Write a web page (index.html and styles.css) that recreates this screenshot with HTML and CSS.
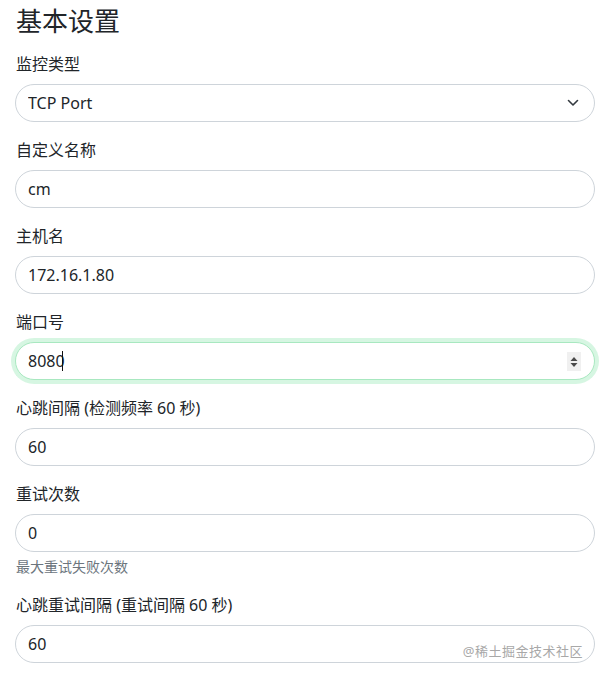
FILE: index.html
```html
<!DOCTYPE html>
<html lang="zh-CN">

<head>
  <meta charset="UTF-8" />
  <meta name="viewport" content="width=device-width, initial-scale=1.0">
  <title>基本设置</title>
  <link rel="stylesheet" href="styles.css">
</head>

<body>
  <div class="page">
    <h2 class="title">基本设置</h2>

    <form class="settings">
      <div class="field">
        <label class="field-label" for="type">监控类型</label>
        <div class="control-wrap">
          <select id="type" class="field-input">
            <option>TCP Port</option>
          </select>
          <svg class="chevron" width="12" height="8" viewBox="0 0 12 8">
            <path d="M1.5 1.5 L6 6 L10.5 1.5" fill="none" stroke="#343a40" stroke-width="1.6" stroke-linecap="round" stroke-linejoin="round" />
          </svg>
        </div>
      </div>

      <div class="field">
        <label class="field-label" for="name">自定义名称</label>
        <input id="name" class="field-input" type="text" value="cm">
      </div>

      <div class="field">
        <label class="field-label" for="host">主机名</label>
        <input id="host" class="field-input" type="text" value="172.16.1.80">
      </div>

      <div class="field">
        <label class="field-label" for="port">端口号</label>
        <div class="control-wrap">
          <input id="port" class="field-input is-focused" type="number" value="8080">
          <span class="caret"></span>
          <span class="spinner">
            <svg width="8" height="16" viewBox="0 0 8 16">
              <path d="M4 3 L7.5 7 L0.5 7 Z" fill="#4a4a4a" />
              <path d="M4 13 L7.5 9 L0.5 9 Z" fill="#4a4a4a" />
            </svg>
          </span>
        </div>
      </div>

      <div class="field">
        <label class="field-label" for="interval">心跳间隔 (检测频率 60 秒)</label>
        <input id="interval" class="field-input" type="number" value="60">
      </div>

      <div class="field">
        <label class="field-label" for="retries">重试次数</label>
        <input id="retries" class="field-input" type="number" value="0">
        <div class="field-hint">最大重试失败次数</div>
      </div>

      <div class="field">
        <label class="field-label" for="retry-interval">心跳重试间隔 (重试间隔 60 秒)</label>
        <input id="retry-interval" class="field-input" type="number" value="60">
      </div>
    </form>
  </div>

  <div class="watermark">@稀土掘金技术社区</div>
</body>

</html>
```

FILE: styles.css
```css
/* Reset & font */
* {
  box-sizing: border-box;
  margin: 0;
  padding: 0;
}

body {
  font-family: 'Noto Sans', 'Noto Sans CJK SC', sans-serif;
  font-size: 16px;
  line-height: 1.5;
  color: #212529;
  background-color: #fff;
  overflow: hidden;
}

.page {
  padding: 6px 6px 0 15px;
}

.title {
  font-size: 26px;
  font-weight: 400;
  line-height: 1.2;
  margin-bottom: 15px;
  padding-left: 1px;
}

/* Form fields */
.field {
  margin-bottom: 16px;
}

.field-label {
  display: block;
  margin-bottom: 8px;
  padding-left: 1px;
}

.control-wrap {
  position: relative;
}

.field-input {
  display: block;
  width: 100%;
  height: 38px;
  padding: 6px 12px;
  font-family: inherit;
  font-size: 16px;
  line-height: 1.5;
  color: #212529;
  background: #fff;
  border: 1px solid #ced4da;
  border-radius: 19px;
  outline: none;
  appearance: none;
  -moz-appearance: textfield;
}

.field-input::-webkit-inner-spin-button,
.field-input::-webkit-outer-spin-button {
  -webkit-appearance: none;
  margin: 0;
}

.field-input.is-focused {
  border-color: #a8e8c0;
  box-shadow: 0 0 0 4px rgba(92, 221, 139, 0.25);
}

.chevron {
  position: absolute;
  right: 16px;
  top: 15px;
}

.caret {
  position: absolute;
  left: 47px;
  top: 9px;
  width: 1px;
  height: 20px;
  background: #111;
}

.spinner {
  position: absolute;
  right: 14px;
  top: 10px;
  width: 14px;
  height: 19px;
  display: flex;
  align-items: center;
  justify-content: center;
  background: #f0f0f0;
}

.field-hint {
  margin-top: 4px;
  font-size: 14px;
  color: #6c757d;
  padding-left: 1px;
}

.watermark {
  position: absolute;
  right: 18px;
  top: 642px;
  font-size: 13px;
  letter-spacing: 0.5px;
  color: #a8a8a8;
}
```
